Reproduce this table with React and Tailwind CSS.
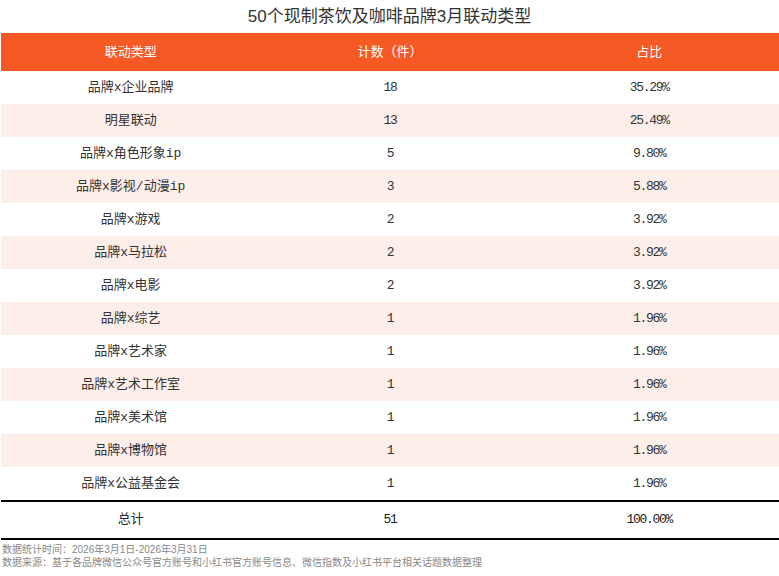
import React from "react";

const rows = [
  ["品牌x企业品牌", "18", "35.29%"],
  ["明星联动", "13", "25.49%"],
  ["品牌x角色形象ip", "5", "9.80%"],
  ["品牌x影视/动漫ip", "3", "5.88%"],
  ["品牌x游戏", "2", "3.92%"],
  ["品牌x马拉松", "2", "3.92%"],
  ["品牌x电影", "2", "3.92%"],
  ["品牌x综艺", "1", "1.96%"],
  ["品牌x艺术家", "1", "1.96%"],
  ["品牌x艺术工作室", "1", "1.96%"],
  ["品牌x美术馆", "1", "1.96%"],
  ["品牌x博物馆", "1", "1.96%"],
  ["品牌x公益基金会", "1", "1.96%"],
];

const body = { fontFamily: '"Liberation Mono", "Noto Sans CJK SC", monospace' };
const sans = { fontFamily: '"Liberation Sans", "Noto Sans CJK SC", sans-serif' };

const App = () => {
  return (
    <div className="w-[779px] h-[576px] bg-white overflow-hidden">
      <div
        className="h-[33px] flex items-center justify-center text-[17px] text-[#333]"
        style={sans}
      >
        50个现制茶饮及咖啡品牌3月联动类型
      </div>
      <div className="ml-px w-[778px]">
        <div
          className="h-[38px] grid grid-cols-3 items-center text-center bg-[#f55a24] text-white text-[13px]"
          style={sans}
        >
          <div>联动类型</div>
          <div>计数（件）</div>
          <div>占比</div>
        </div>
        {rows.map((r, i) => (
          <div
            key={i}
            className={
              "h-[33px] grid grid-cols-3 items-center text-center text-[13px] text-[#333] " +
              (i % 2 === 1 ? "bg-[#fdeee9]" : "bg-white")
            }
            style={body}
          >
            <div>{r[0]}</div>
            <div className="tracking-[-1.3px]">{r[1]}</div>
            <div className="tracking-[-1.3px]">{r[2]}</div>
          </div>
        ))}
        <div
          className="h-[40px] grid grid-cols-3 items-center text-center text-[13px] text-[#222] border-y-2 border-black"
          style={body}
        >
          <div>总计</div>
          <div className="tracking-[-1.3px]">51</div>
          <div className="tracking-[-1.3px]">100.00%</div>
        </div>
      </div>
      <div className="pl-[2px] pt-[3px] text-[10px] leading-[13px] text-[#888]" style={sans}>
        <div>数据统计时间：2026年3月1日-2026年3月31日</div>
        <div>数据来源：基于各品牌微信公众号官方账号和小红书官方账号信息、微信指数及小红书平台相关话题数据整理</div>
      </div>
    </div>
  );
};

export default App;
